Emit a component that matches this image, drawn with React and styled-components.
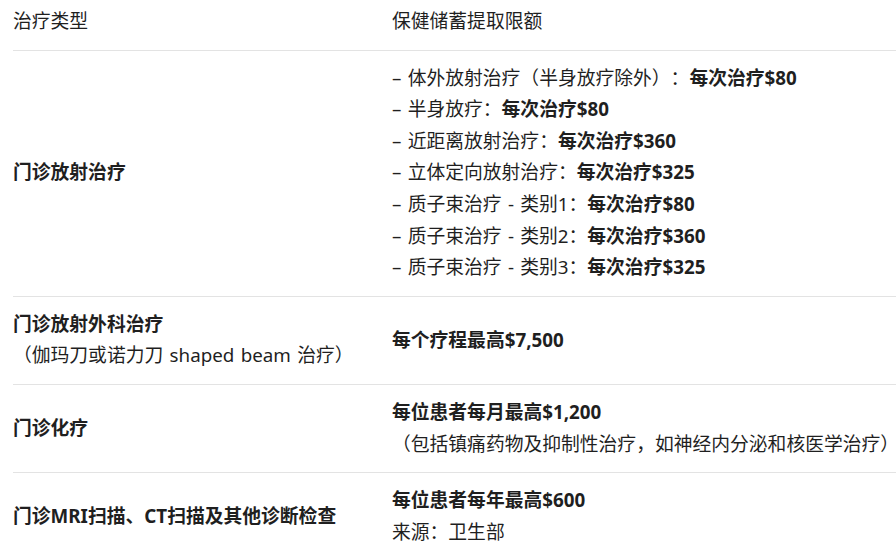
import React from "react";
import styled, {createGlobalStyle} from "styled-components";

const GlobalStyle = createGlobalStyle`
  html, body {
    margin: 0;
    padding: 0;
    background: #fff;
  }
  body {
    font-family: "Noto Sans", "Noto Sans CJK SC", sans-serif;
    color: #1f1f1f;
    overflow: hidden;
    text-spacing-trim: space-all;
  }
`;

const rows = [
  {
    type: ["门诊放射治疗"],
    items: [
      {label: "体外放射治疗（半身放疗除外）：", amount: "每次治疗$80"},
      {label: "半身放疗：", amount: "每次治疗$80"},
      {label: "近距离放射治疗：", amount: "每次治疗$360"},
      {label: "立体定向放射治疗：", amount: "每次治疗$325"},
      {label: "质子束治疗 - 类别1：", amount: "每次治疗$80"},
      {label: "质子束治疗 - 类别2：", amount: "每次治疗$360"},
      {label: "质子束治疗 - 类别3：", amount: "每次治疗$325"}
    ]
  },
  {
    type: ["门诊放射外科治疗", "（伽玛刀或诺力刀 shaped beam 治疗）"],
    limit: ["每个疗程最高$7,500"]
  },
  {
    type: ["门诊化疗"],
    limit: ["每位患者每月最高$1,200", "（包括镇痛药物及抑制性治疗，如神经内分泌和核医学治疗）"]
  },
  {
    type: ["门诊MRI扫描、CT扫描及其他诊断检查"],
    limit: ["每位患者每年最高$600", "来源：卫生部"]
  }
];

const App = () => (
  <Page>
    <GlobalStyle />
    <Table>
      <colgroup>
        <App.Col $width="379px" />
        <App.Col />
      </colgroup>
      <thead>
        <tr>
          <App.HeadCell>治疗类型</App.HeadCell>
          <App.HeadCell>保健储蓄提取限额</App.HeadCell>
        </tr>
      </thead>
      <tbody>
        {rows.map((row, i) => (
          <tr key={i}>
            <App.Cell>
              {row.type.map((t, j) => (
                <App.Line key={j} $bold={j === 0}>
                  {t}
                </App.Line>
              ))}
            </App.Cell>
            <App.Cell>
              {row.items &&
                row.items.map((item, j) => (
                  <App.Line key={j}>
                    – {item.label}
                    <strong>{item.amount}</strong>
                  </App.Line>
                ))}
              {row.limit &&
                row.limit.map((t, j) => (
                  <App.Line key={j} $bold={j === 0}>
                    {t}
                  </App.Line>
                ))}
            </App.Cell>
          </tr>
        ))}
      </tbody>
    </Table>
  </Page>
);

const Page = styled.div`
  padding-left: 13px;
`;

const Table = styled.table`
  width: 100%;
  table-layout: fixed;
  border-collapse: collapse;
  font-size: 18.8px;
  line-height: 31.6px;
  word-spacing: 1.4px;
`;

App.Col = styled.col`
  width: ${props => props.$width || "auto"};
`;

App.HeadCell = styled.th`
  text-align: left;
  font-weight: 400;
  padding: 6px 0 12px;
  border-bottom: 1px solid #e3e3e3;
  white-space: nowrap;
`;

App.Cell = styled.td`
  vertical-align: middle;
  padding: 12px 0 12px;
  border-bottom: 1px solid #e3e3e3;
  white-space: nowrap;
  overflow: visible;

  strong {
    font-weight: 700;
  }
`;

App.Line = styled.div`
  font-weight: ${props => (props.$bold ? 700 : 400)};
`;

export default App;
